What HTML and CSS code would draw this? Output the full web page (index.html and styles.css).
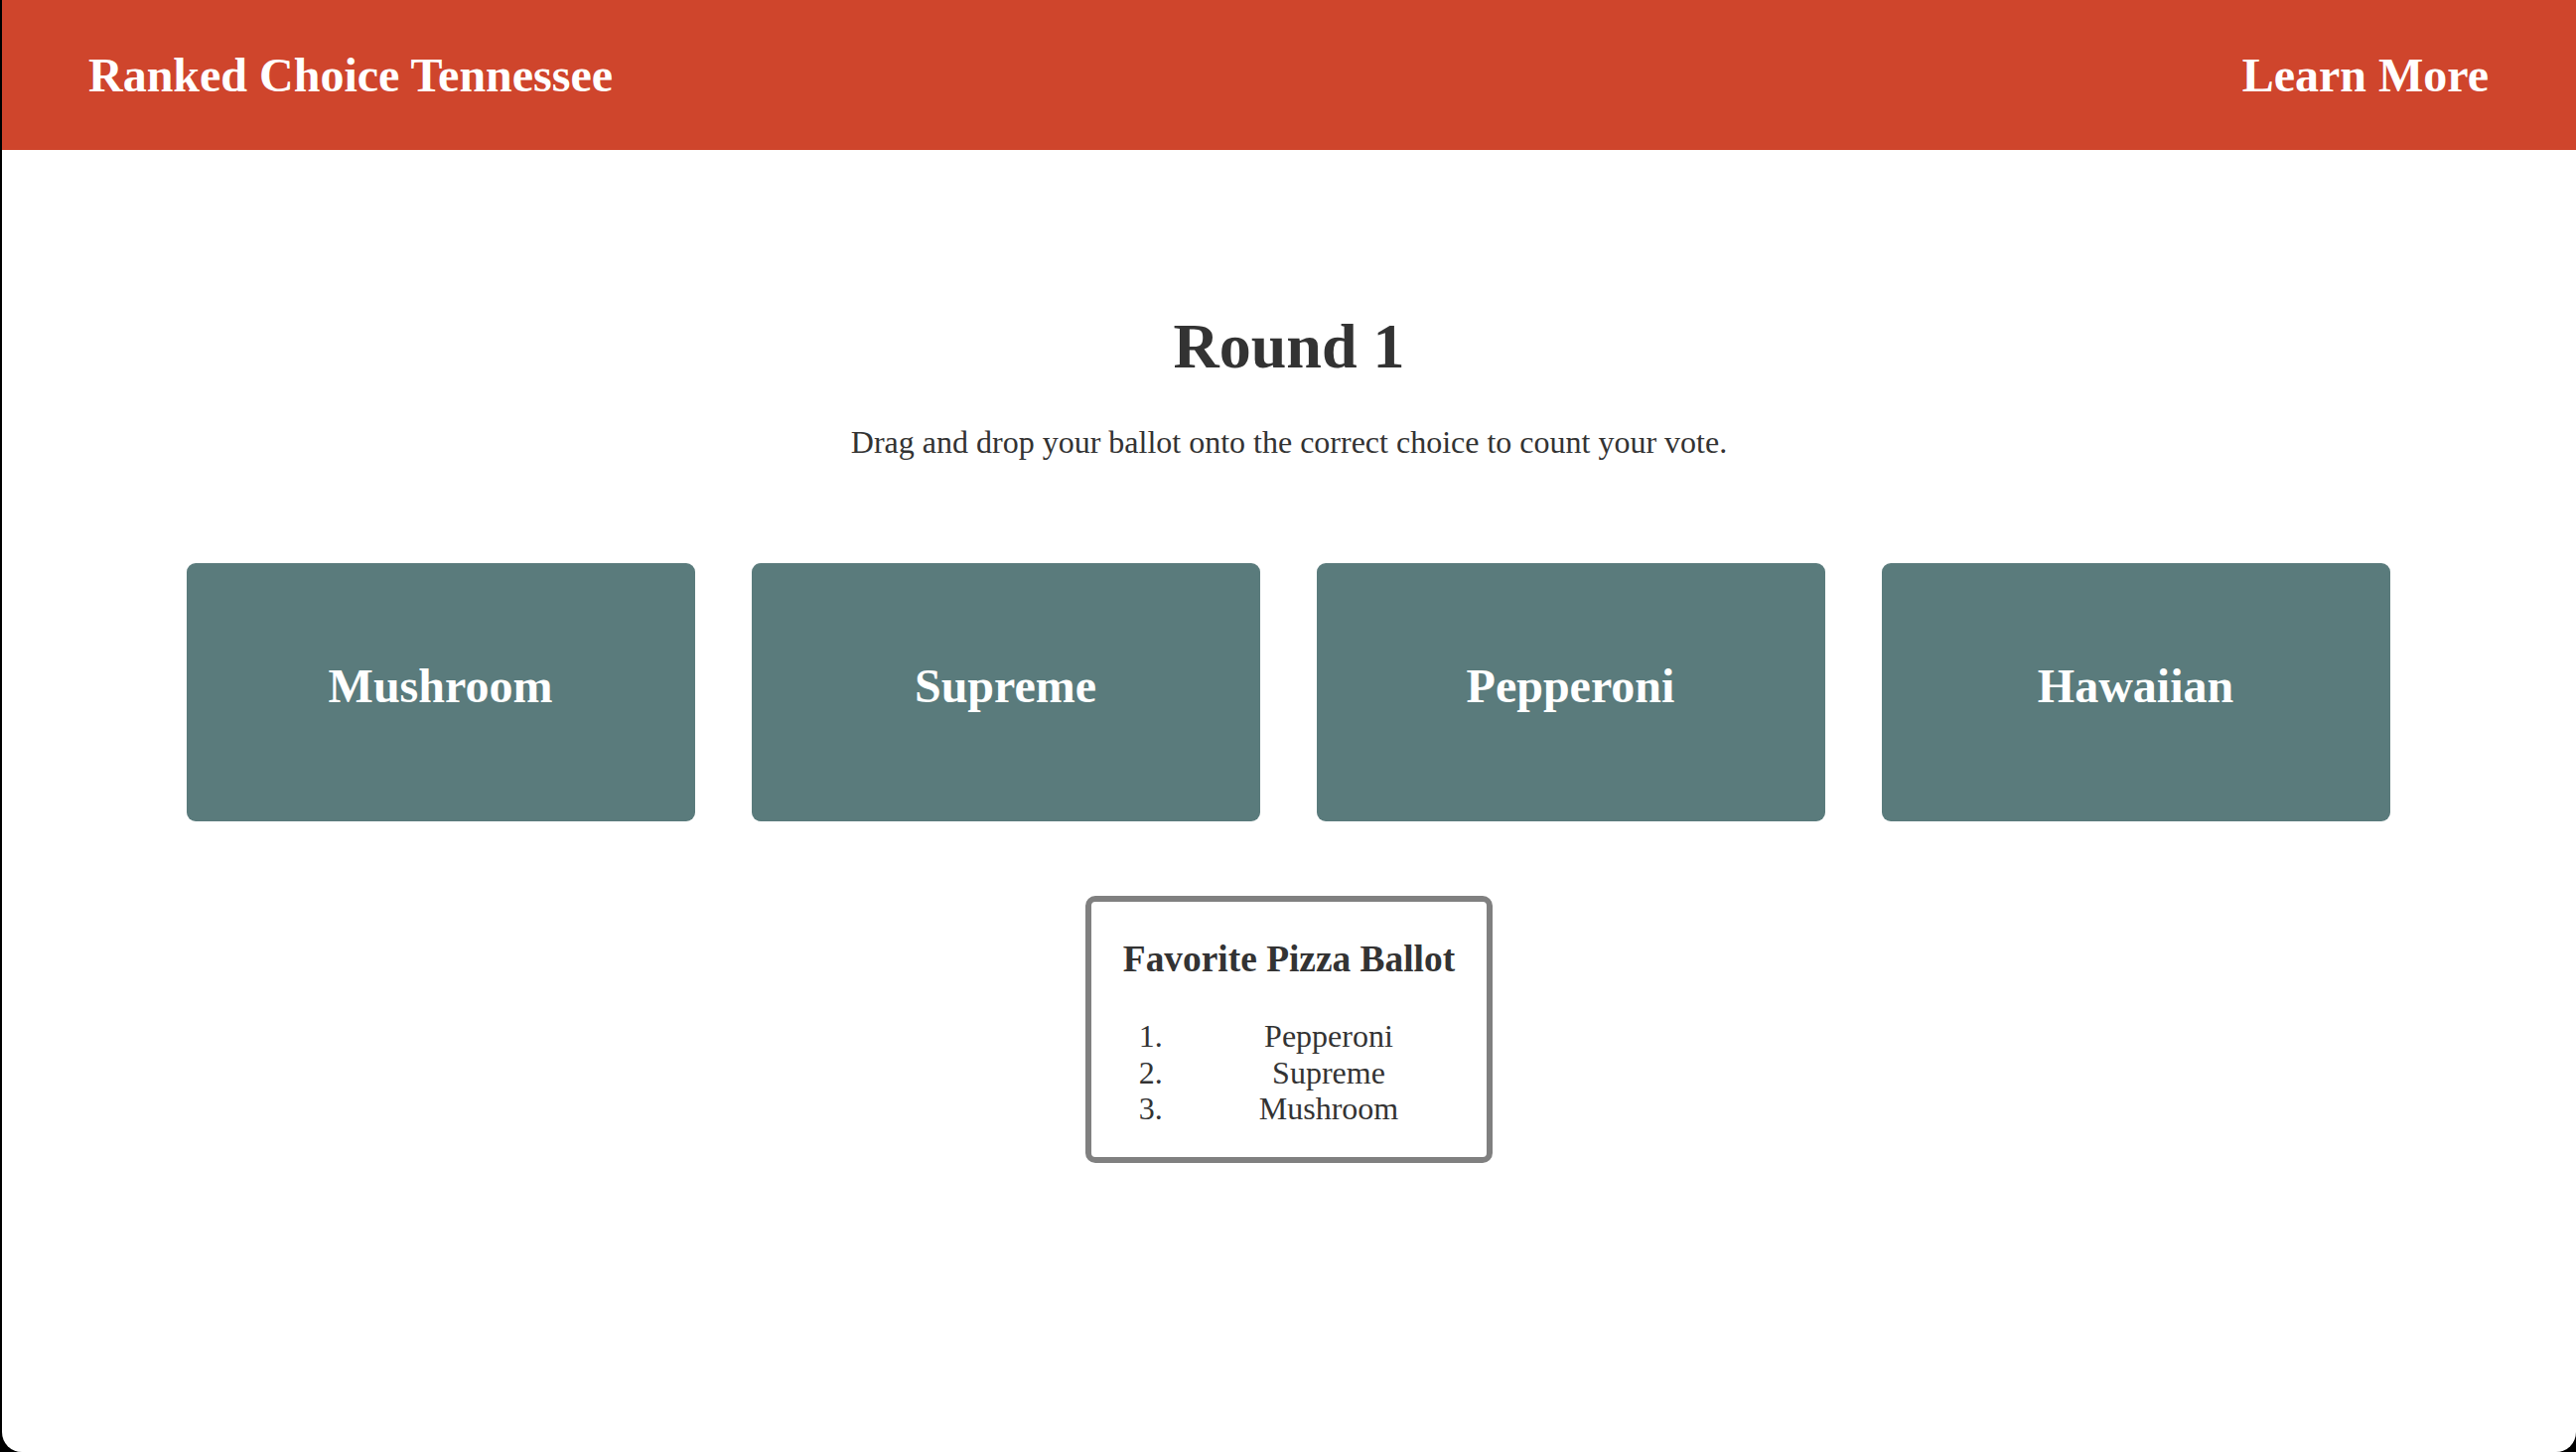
FILE: index.html
```html
<!DOCTYPE html>
<html lang="en">
<head>
<meta charset="utf-8">
<title>Ranked Choice Tennessee</title>
<link rel="stylesheet" href="styles.css">
</head>
<body>
<div class="window">
  <header class="topbar">
    <a class="brand" href="#">Ranked Choice Tennessee</a>
    <a class="learn" href="#">Learn More</a>
  </header>
  <main class="content">
    <h1 class="round-title">Round 1</h1>
    <p class="instructions">Drag and drop your ballot onto the correct choice to count your vote.</p>
    <div class="choices">
      <div class="choice"><h2 class="choice-name">Mushroom</h2></div>
      <div class="choice"><h2 class="choice-name">Supreme</h2></div>
      <div class="choice"><h2 class="choice-name">Pepperoni</h2></div>
      <div class="choice"><h2 class="choice-name">Hawaiian</h2></div>
    </div>
    <div class="ballot">
      <h3 class="ballot-title">Favorite Pizza Ballot</h3>
      <ol class="ballot-list">
        <li>Pepperoni</li>
        <li>Supreme</li>
        <li>Mushroom</li>
      </ol>
    </div>
  </main>
</div>
</body>
</html>
```

FILE: styles.css
```css
html, body {
  margin: 0;
  padding: 0;
  background: #000;
}

body {
  font-family: "Liberation Serif", "Times New Roman", serif;
  color: #333333;
}

.window {
  margin-left: 2px;
  min-height: 1462px;
  background: #ffffff;
  border-bottom-right-radius: 20px;
  border-bottom-left-radius: 20px;
}

.topbar {
  height: 151px;
  background: #cf452c;
  display: flex;
  align-items: center;
  justify-content: space-between;
  padding: 0 88px 0 87px;
}

.brand,
.learn {
  color: #ffffff;
  text-decoration: none;
  font-weight: bold;
  font-size: 48px;
}

.content {
  padding-top: 161px;
  display: flex;
  flex-direction: column;
  align-items: center;
}

.round-title {
  margin: 0;
  font-size: 64px;
  font-weight: bold;
  line-height: 74px;
}

.instructions {
  margin: 41px 0 103px;
  font-size: 32px;
  line-height: 37px;
}

.choices {
  display: grid;
  grid-template-columns: repeat(4, 512px);
  gap: 57px;
  margin-right: 2px;
}

.choice {
  height: 260px;
  background: #5a7b7c;
  border-radius: 9px;
  box-sizing: border-box;
  padding-top: 96px;
  text-align: center;
}

.choice-name {
  margin: 0;
  color: #ffffff;
  font-size: 48px;
  line-height: 55px;
  font-weight: bold;
}

.ballot {
  margin-top: 75px;
  border: 6px solid #808080;
  border-radius: 10px;
  padding: 36px 32px 30px;
  width: fit-content;
}

.ballot-title {
  margin: 0 0 38px;
  font-size: 37.4px;
  line-height: 43px;
  font-weight: bold;
}

.ballot-list {
  margin: 0;
  padding: 0;
  list-style: none;
  counter-reset: rank;
  font-size: 32px;
  line-height: 36.6px;
}

.ballot-list li {
  counter-increment: rank;
  display: grid;
  grid-template-columns: 80px 1fr;
}

.ballot-list li::before {
  content: counter(rank) ".";
  padding-left: 16px;
  text-align: left;
}

.ballot-list li {
  text-align: center;
}
```
